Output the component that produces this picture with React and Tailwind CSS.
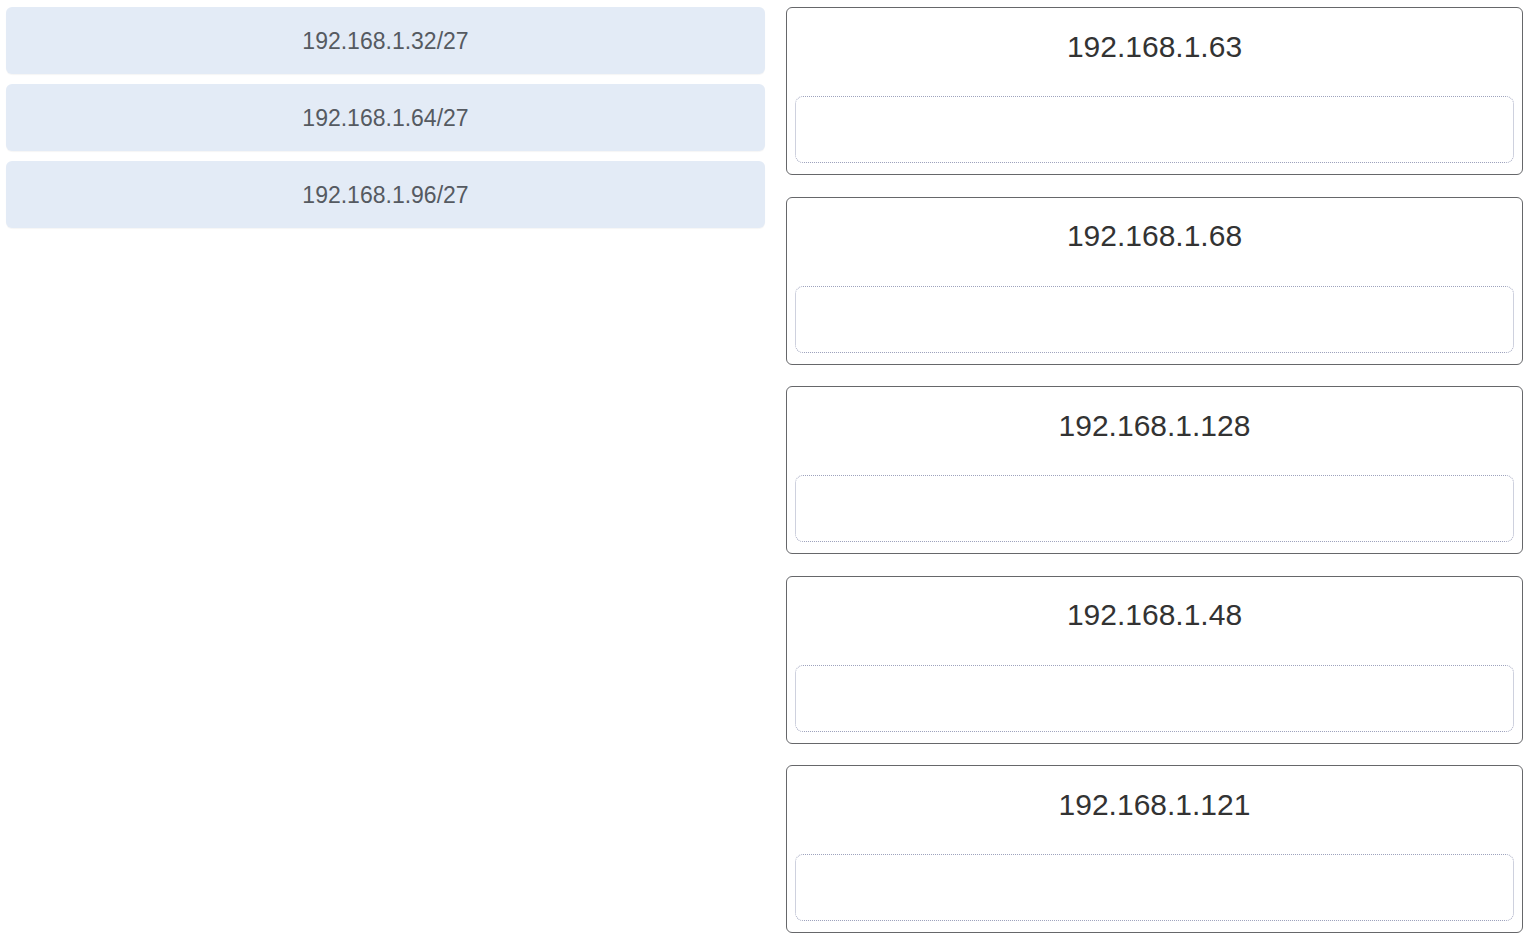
const subnets = ['192.168.1.32/27', '192.168.1.64/27', '192.168.1.96/27']
const hosts = ['192.168.1.63', '192.168.1.68', '192.168.1.128', '192.168.1.48', '192.168.1.121']

const App = () => {
  return (
    <div className="flex min-h-screen gap-[21px] bg-white pl-[6px] pt-[7px] font-['Liberation_Sans',Arial,sans-serif]">
      <div className="flex w-[759px] flex-col gap-[10px]">
        {subnets.map((s) => (
          <div
            key={s}
            className="flex h-[67px] items-center justify-center rounded-[6px] bg-[#e3ebf6] pt-[2px] text-[23px] text-[#555a61] shadow-[0_1px_1px_rgba(0,0,0,0.04)]"
          >
            {s}
          </div>
        ))}
      </div>

      <div className="flex w-[737px] flex-col gap-[21.5px]">
        {hosts.map((h) => (
          <div
            key={h}
            className="flex h-[168px] flex-col rounded-[6px] border-[1.5px] border-[#66676a] bg-white px-[8px] pb-[11px]"
          >
            <div className="flex h-[88px] items-center justify-center pb-[12px] text-[30px] text-[#333333]">{h}</div>
            <div className="flex-1 rounded-[8px] border border-dotted border-[#9ea3bd]" />
          </div>
        ))}
      </div>
    </div>
  )
}

export default App
